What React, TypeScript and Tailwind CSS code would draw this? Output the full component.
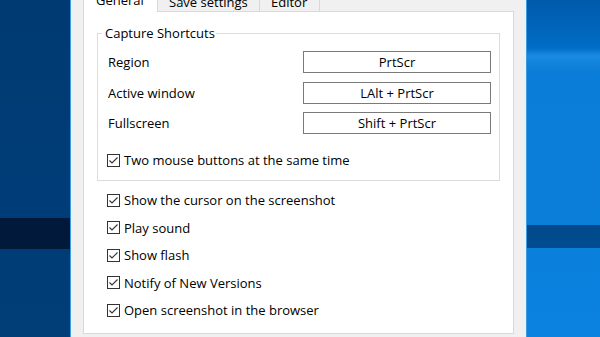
import React from 'react'

const font = { fontFamily: '"Open Sans", "Noto Sans", sans-serif' }

const Check = ({ label }: { label: string }) => (
  <label className="flex items-center h-[20px] gap-[4px] text-black">
    <span className="w-[13px] h-[13px] border border-[#333] bg-white flex items-center justify-center shrink-0">
      <svg width="11" height="11" viewBox="0 0 11 11">
        <path d="M1.5 5.5 L4 8 L9.5 2.5" fill="none" stroke="#333" strokeWidth="1.1" />
      </svg>
    </span>
    <span>{label}</span>
  </label>
)

const Shortcut = ({ label, value }: { label: string; value: string }) => (
  <div className="flex items-center h-[22px]">
    <span className="flex-1">{label}</span>
    <div className="w-[188px] h-[22px] border border-[#7a7a7a] bg-white flex items-center justify-center">
      {value}
    </div>
  </div>
)

export default function App() {
  return (
    <div className="w-[600px] h-[337px] overflow-hidden flex text-[13px] leading-4 text-black" style={font}>
      <div className="w-[70px] bg-[linear-gradient(to_bottom,#003a72_0px,#003d78_218px,#00193a_218px,#001a3a_249px,#003d77_249px,#003e78_337px)]" />

      <div className="w-[457px] border-x border-[#3d9be4] bg-[#f0f0f0] flex flex-col px-[12px] -mt-[10px]">
        <div className="flex items-end h-[22px] -mb-px relative z-10">
          <div className="w-[75px] h-[22px] bg-white border border-b-0 border-[#d9d9d9] pl-[12px] pt-[1px]">General</div>
          <div className="w-[102px] h-[20px] bg-[#f0f0f0] border border-[#d9d9d9] border-l-0 pl-[11px] pt-[1px]">Save settings</div>
          <div className="w-[60px] h-[20px] bg-[#f0f0f0] border border-[#d9d9d9] border-l-0 pl-[11px] pt-[1px]">Editor</div>
        </div>

        <div className="h-[323px] bg-white border border-[#d9d9d9] px-[13px]">
          <fieldset className="mt-[13px] border border-[#dcdcdc]">
            <legend className="ml-[4px] pl-[3px] pr-[1px]">Capture Shortcuts</legend>
            <div className="pl-[10px] pr-[8px] pt-[10px] pb-[10px] flex flex-col">
              <div className="flex flex-col gap-[8.5px]">
                <Shortcut label="Region" value="PrtScr" />
                <Shortcut label="Active window" value="LAlt + PrtScr" />
                <Shortcut label="Fullscreen" value="Shift + PrtScr" />
              </div>
              <div className="mt-[16px] -ml-px">
                <Check label="Two mouse buttons at the same time" />
              </div>
            </div>
          </fieldset>

          <div className="mt-[9px] pl-[10px] flex flex-col gap-[7.5px]">
            <Check label="Show the cursor on the screenshot" />
            <Check label="Play sound" />
            <Check label="Show flash" />
            <Check label="Notify of New Versions" />
            <Check label="Open screenshot in the browser" />
          </div>
        </div>
      </div>

      <div className="flex-1 bg-[linear-gradient(to_bottom,#005aac_0px,#006dc6_48px,#1a8ae2_56px,#1384dc_62px,#0a7dd8_72px,#0a7fda_225px,#004a8c_225px,#004c8e_248px,#0a80dc_248px,#0a82e0_337px)]" />
    </div>
  )
}
